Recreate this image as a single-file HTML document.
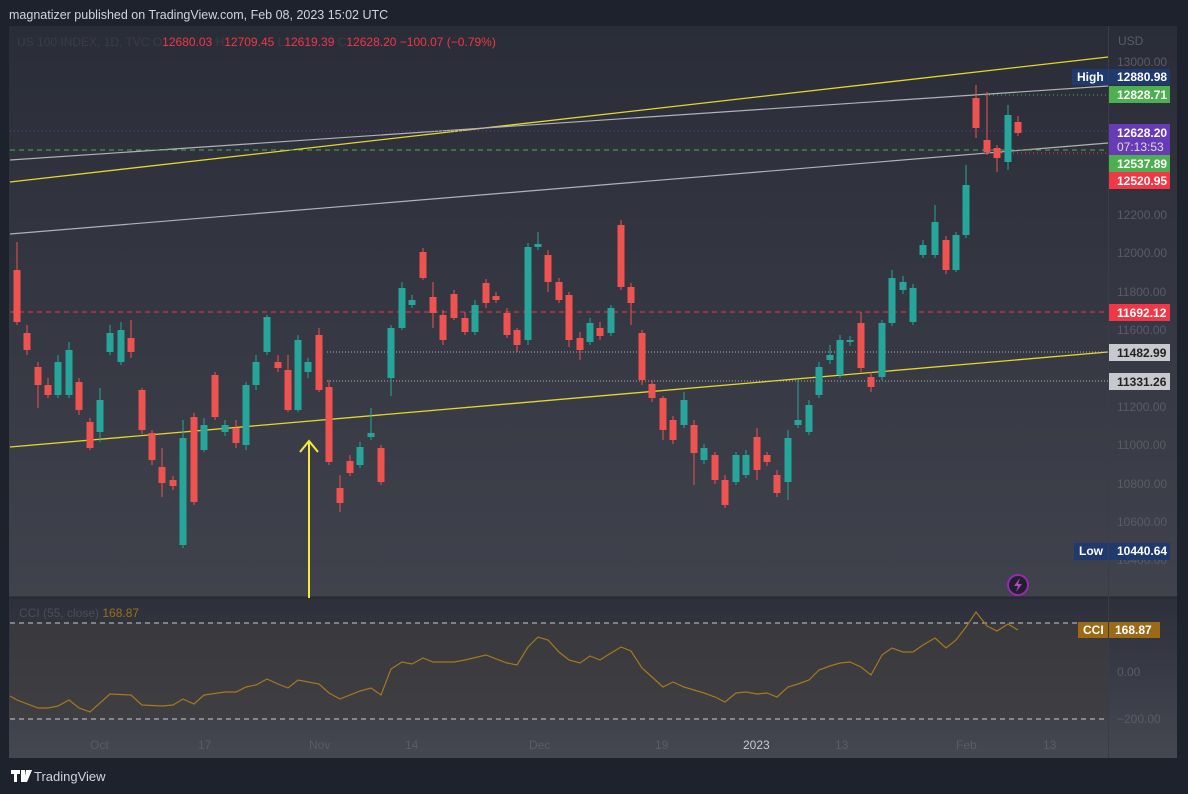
<!DOCTYPE html>
<html><head><meta charset="utf-8"><style>
body{margin:0;width:1188px;height:794px;background:#1e222d;overflow:hidden;font-family:"Liberation Sans",sans-serif}
svg{position:absolute;left:0;top:0}
</style></head><body>
<svg id="s" width="1188" height="794" xmlns="http://www.w3.org/2000/svg" font-family="Liberation Sans, sans-serif">
<defs>
<linearGradient id="bg" x1="0" y1="0" x2="0" y2="1"><stop offset="0" stop-color="#2a2d38"/><stop offset="1" stop-color="#464852"/></linearGradient>
<linearGradient id="bg2" x1="0" y1="0" x2="0" y2="1"><stop offset="0" stop-color="#2d303b"/><stop offset="1" stop-color="#454751"/></linearGradient>
</defs>
<text x="9" y="19" fill="#d1d4dc" font-size="12.5">magnatizer published on TradingView.com, Feb 08, 2023 15:02 UTC</text>
<rect x="9" y="26" width="1168" height="732" fill="url(#bg)"/>
<rect x="9" y="598" width="1168" height="160" fill="url(#bg2)"/>
<rect x="10" y="623" width="1098" height="96" fill="#403d3d" opacity="0.6"/>
<line x1="9" y1="597.5" x2="1177" y2="597.5" stroke="#262932" stroke-width="2"/>
<line x1="1108.5" y1="26" x2="1108.5" y2="758" stroke="#3a3d47"/>
<g id="lines"></g>
<g id="c"></g>
<text x="17" y="46" font-size="12" fill="#3a3d47">US 100 INDEX, 1D, TVC  O<tspan fill="#f23645">12680.03</tspan>  H<tspan fill="#f23645">12709.45</tspan>  L<tspan fill="#f23645">12619.39</tspan>  C<tspan fill="#f23645">12628.20  −100.07 (−0.79%)</tspan></text>
<text x="19" y="617" font-size="12" fill="#4b4e58">CCI (55, close)  <tspan fill="#9a6f16">168.87</tspan></text>
<g font-size="12" fill="#595c66">
<text x="1118" y="45">USD</text>
<text x="1117" y="66">13000.00</text>
<text x="1117" y="219">12200.00</text>
<text x="1117" y="257">12000.00</text>
<text x="1117" y="296">11800.00</text>
<text x="1117" y="334">11600.00</text>
<text x="1117" y="411">11200.00</text>
<text x="1117" y="449">11000.00</text>
<text x="1117" y="488">10800.00</text>
<text x="1117" y="526">10600.00</text>
<text x="1117" y="564">10400.00</text>
<text x="1117" y="676">0.00</text>
<text x="1117" y="723">−200.00</text>
<text x="90" y="749">Oct</text><text x="198" y="749">17</text><text x="309" y="749">Nov</text><text x="405" y="749">14</text><text x="529" y="749">Dec</text><text x="655" y="749">19</text><text x="743" y="749" fill="#c7c9cf">2023</text><text x="835" y="749">13</text><text x="956" y="749">Feb</text><text x="1043" y="749">13</text>
</g>
<g font-size="12" font-weight="bold" fill="#fff">
<rect x="1072" y="69" width="36" height="16" fill="#1e3a6e"/><text x="1077" y="81">High</text>
<rect x="1109" y="69" width="61" height="16" fill="#1e3a6e"/><text x="1117" y="81">12880.98</text>
<rect x="1109" y="86" width="61" height="17" fill="#4caf50"/><text x="1117" y="99">12828.71</text>
<rect x="1109" y="124" width="61" height="31" fill="#673ab7"/><text x="1117" y="137">12628.20</text><text x="1117" y="151" font-weight="normal" fill="#ddd">07:13:53</text>
<rect x="1109" y="155" width="61" height="17" fill="#4caf50"/><text x="1117" y="168">12537.89</text>
<rect x="1109" y="172" width="61" height="17" fill="#f23645"/><text x="1117" y="185">12520.95</text>
<rect x="1109" y="304" width="61" height="17" fill="#f23645"/><text x="1117" y="317">11692.12</text>
<rect x="1109" y="344" width="61" height="17" fill="#c7c9ce"/><text x="1117" y="357" fill="#222">11482.99</text>
<rect x="1109" y="373" width="61" height="17" fill="#c7c9ce"/><text x="1117" y="386" fill="#222">11331.26</text>
<rect x="1074" y="543" width="34" height="17" fill="#1e3a6e"/><text x="1079" y="555">Low</text>
<rect x="1109" y="543" width="61" height="17" fill="#1e3a6e"/><text x="1117" y="555">10440.64</text>
<rect x="1078" y="622" width="30" height="16" fill="#9a6a16"/><text x="1083" y="634">CCI</text>
<rect x="1109" y="622" width="51" height="16" fill="#9a6a16"/><text x="1115" y="634">168.87</text>
</g>
<circle cx="1018" cy="585" r="10" fill="#1e222d" stroke="#9c27b0" stroke-width="2"/>
<path d="M1020 578 L1014 586 L1018 586 L1016 592 L1022 584 L1018 584 Z" fill="#c040d0"/>
<g fill="#fff"><path d="M11 770h9v4h-3v8h-3v-8h-3z M21 770h4v12h-4z M26 770h6l-5 12h-3z"/></g>
<text x="34" y="781" font-size="13" fill="#d1d4dc">TradingView</text>
</svg>
<script>
const N="http://www.w3.org/2000/svg";
function el(p,t,a){const e=document.createElementNS(N,t);for(const k in a)e.setAttribute(k,a[k]);p.appendChild(e);return e}
const L=document.getElementById('lines');
el(L,'line',{x1:10,y1:182,x2:1108,y2:57,stroke:'#e6d52a','stroke-width':1.3});
el(L,'line',{x1:10,y1:160,x2:1108,y2:86,stroke:'#b0b2b8','stroke-width':1.2});
el(L,'line',{x1:10,y1:234,x2:1108,y2:143,stroke:'#b0b2b8','stroke-width':1.2});
el(L,'line',{x1:10,y1:447,x2:1108,y2:352,stroke:'#e6d52a','stroke-width':1.3});
el(L,'line',{x1:10,y1:312,x2:1108,y2:312,stroke:'#f23645','stroke-dasharray':'5 4'});
el(L,'line',{x1:327,y1:352,x2:1108,y2:352,stroke:'#b0b2b8','stroke-dasharray':'1 2'});
el(L,'line',{x1:327,y1:381,x2:1108,y2:381,stroke:'#b0b2b8','stroke-dasharray':'1 2'});
el(L,'line',{x1:10,y1:150,x2:1108,y2:150,stroke:'#4caf50','stroke-dasharray':'5 4'});
el(L,'line',{x1:10,y1:131,x2:1108,y2:131,stroke:'#673ab7','stroke-dasharray':'1 3'});
el(L,'line',{x1:985,y1:95,x2:1108,y2:95,stroke:'#4caf50','stroke-dasharray':'1 3'});
el(L,'line',{x1:985,y1:153,x2:1108,y2:153,stroke:'#f23645','stroke-dasharray':'1 3'});
el(L,'line',{x1:309,y1:442,x2:309,y2:598,stroke:'#f5eb3b','stroke-width':2});
el(L,'path',{d:'M300 452 L309 441 L318 452',stroke:'#f5eb3b','stroke-width':2,fill:'none'});
el(L,'line',{x1:10,y1:623,x2:1108,y2:623,stroke:'#ccc','stroke-dasharray':'5 4'});
el(L,'line',{x1:10,y1:719,x2:1108,y2:719,stroke:'#ccc','stroke-dasharray':'5 4'});
const cci=[[10,696],[17,700],[38,708],[48,708],[58,706],[69,700],[79,708],[90,712],[110,694],[131,695],[142,705],[162,706],[173,705],[183,699],[194,704],[204,695],[225,692],[236,692],[246,687],[256,685],[267,679],[278,684],[288,688],[298,680],[319,684],[329,693],[340,699],[360,691],[371,688],[381,695],[391,669],[402,662],[412,664],[423,658],[433,662],[454,662],[465,660],[486,655],[507,663],[517,665],[528,647],[538,637],[548,640],[559,652],[569,660],[580,663],[590,656],[600,660],[611,653],[621,647],[631,651],[642,668],[652,677],[663,687],[673,682],[684,687],[694,690],[704,693],[715,697],[725,702],[736,693],[746,692],[757,694],[767,693],[777,697],[788,687],[798,684],[809,680],[819,670],[830,666],[840,663],[850,662],[861,667],[871,675],[882,655],[892,648],[903,652],[913,652],[923,645],[935,638],[946,648],[956,640],[966,627],[976,612],[987,626],[997,631],[1008,624],[1018,630]];
el(L,'polyline',{points:cci.map(p=>p.join(',')).join(' '),fill:'none',stroke:'#a7781c','stroke-width':1.2});
const d=[[17,'r',270,322,242,325],[27,'r',333,350,325,355],[38,'r',367,385,362,408],[48,'r',385,395,378,398],[58,'g',362,395,355,398],[69,'g',350,395,342,398],[79,'r',382,410,378,415],[90,'r',422,448,418,450],[100,'g',400,432,388,442],[110,'g',333,352,325,355],[121,'g',330,362,322,365],[131,'r',338,352,320,358],[142,'r',390,430,388,434],[152,'r',433,460,430,465],[162,'r',467,483,448,497],[173,'r',480,486,476,490],[183,'g',438,545,420,548],[194,'r',417,502,413,505],[204,'g',425,450,418,452],[215,'r',375,417,372,420],[225,'g',425,432,420,436],[236,'r',428,443,420,448],[246,'g',385,445,382,450],[256,'g',362,385,355,390],[267,'g',317,352,315,355],[278,'r',362,368,355,372],[288,'r',370,410,355,412],[298,'g',340,410,335,412],[308,'g',362,372,358,378],[319,'r',335,390,328,392],[329,'r',387,462,380,465],[340,'r',488,503,475,512],[350,'r',461,473,455,476],[360,'g',447,465,442,468],[371,'g',433,437,408,440],[381,'r',448,482,445,485],[391,'g',328,378,325,396],[402,'g',288,328,282,330],[412,'g',300,305,295,308],[423,'r',252,278,248,280],[433,'r',297,313,282,328],[443,'r',315,340,310,345],[454,'r',294,318,290,320],[465,'r',318,332,312,335],[475,'g',305,332,300,335],[486,'r',283,303,279,308],[496,'r',296,300,292,303],[507,'r',313,335,308,338],[517,'r',330,345,328,352],[528,'g',247,340,243,345],[538,'g',244,247,232,250],[548,'r',255,282,250,292],[559,'r',282,300,278,303],[569,'r',295,340,292,347],[580,'r',338,350,332,360],[590,'g',323,342,318,345],[600,'r',328,336,322,340],[611,'g',308,333,305,336],[621,'r',225,287,220,290],[631,'r',287,303,283,325],[642,'r',333,380,330,385],[652,'r',384,398,380,402],[663,'r',398,430,396,440],[673,'r',420,440,416,444],[684,'g',400,425,392,428],[694,'r',425,453,420,485],[704,'g',448,460,444,464],[715,'r',455,480,452,484],[725,'r',480,505,475,508],[736,'g',455,482,452,485],[746,'g',455,475,450,478],[757,'r',437,470,428,480],[767,'r',455,462,452,466],[777,'r',475,493,470,497],[788,'g',438,482,430,500],[798,'g',420,425,380,428],[809,'g',405,432,400,435],[819,'g',367,395,362,398],[830,'g',355,360,345,364],[840,'g',340,375,335,378],[850,'g',340,342,336,346],[861,'r',323,368,312,372],[871,'r',377,387,372,392],[882,'g',323,377,320,380],[892,'g',278,323,270,326],[903,'g',282,290,276,294],[913,'g',288,322,284,325],[923,'g',245,255,240,258],[935,'g',222,255,205,258],[946,'r',240,270,236,274],[956,'g',235,270,232,272],[966,'g',185,235,165,238],[976,'r',98,128,85,138],[987,'r',140,152,92,155],[997,'r',148,158,145,172],[1008,'g',115,162,105,170],[1018,'r',122,133,116,136]];
const C=document.getElementById('c');
d.forEach(([x,c,a,b,h,l])=>{const col=c=='r'?'#ef5350':'#26a69a';el(C,'line',{x1:x,y1:h,x2:x,y2:l,stroke:col});el(C,'rect',{x:x-3.5,y:a,width:7,height:Math.max(1,b-a),fill:col});});
</script>
</body></html>
